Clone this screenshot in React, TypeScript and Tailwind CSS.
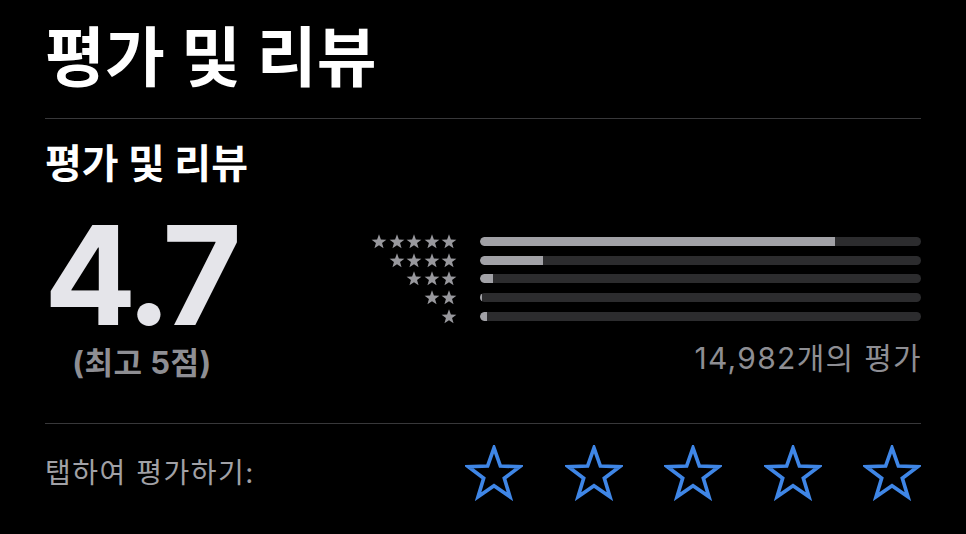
import React from "react";

const KR = '"Inter", "Noto Sans CJK KR", sans-serif';

function SmallStar() {
  return (
    <svg width="16" height="15" viewBox="0 0 24 23" className="block">
      <polygon
        points="12,0.5 14.9,8.4 23.3,8.7 16.7,13.9 19,22 12,17.3 5,22 7.3,13.9 0.7,8.7 9.1,8.4"
        fill="#98989d"
      />
    </svg>
  );
}

function BigStar() {
  return (
    <svg width="58" height="56" viewBox="0 0 60 58" className="block">
      <polygon
        points="30,3 36.6,21.8 56.6,22.4 40.7,34.5 46.5,53.6 30,42.3 13.5,53.6 19.3,34.5 3.4,22.4 23.4,21.8"
        fill="none"
        stroke="#3f86e6"
        strokeWidth="3.8"
        strokeLinejoin="miter"
        strokeMiterlimit="10"
      />
    </svg>
  );
}

const rows = [
  { stars: 5, pct: 80.5 },
  { stars: 4, pct: 14.3 },
  { stars: 3, pct: 3.0 },
  { stars: 2, pct: 0.5 },
  { stars: 1, pct: 1.6 },
];

export default function App() {
  return (
    <div
      className="w-[966px] h-[534px] bg-black overflow-hidden px-[45px] text-white"
      style={{ fontFamily: KR }}
    >
      <div className="h-[119px] border-b border-[#38383a] flex items-center pb-[4px]">
        <h1 className="text-[65px] leading-none font-bold tracking-[0.3px] text-white">
          평가 및 리뷰
        </h1>
      </div>

      <div className="h-[305px] border-b border-[#38383a] flex flex-col">
        <h2 className="pt-[25px] text-[40px] leading-none font-bold tracking-[0px] text-white">
          평가 및 리뷰
        </h2>
        <div className="flex mt-[22px]">
          <div className="w-[194px] flex flex-col items-center">
            <div
              className="mt-[14px] text-[137px] leading-[110px] font-bold tracking-[-6px] text-[#e5e5ea] pr-[4px]"
              style={{ fontFamily: '"Inter", sans-serif' }}
            >
              4.7
            </div>
            <div className="mt-[17px] text-[31px] leading-none font-bold text-[#8e8e93] tracking-[0.5px]">
              (최고 5점)
            </div>
          </div>
          <div className="flex-1 flex flex-col pl-[131px] pt-[26px]">
            {rows.map((r) => (
              <div key={r.stars} className="h-[18.75px] flex items-center">
                <div className="w-[87px] flex justify-end gap-[1.5px]">
                  {Array.from({ length: r.stars }).map((_, i) => (
                    <SmallStar key={i} />
                  ))}
                </div>
                <div className="ml-[23px] flex-1 h-[9px] rounded-full bg-[#2c2c2e] overflow-hidden">
                  <div
                    className="h-full bg-[#a1a1a6] rounded-l-full"
                    style={{ width: `${r.pct}%` }}
                  />
                </div>
              </div>
            ))}
            <div className="mt-[17px] text-right text-[30px] leading-none text-[#8e8e93] tracking-[1.3px] mr-[-1px]">
              14,982개의 평가
            </div>
          </div>
        </div>
      </div>

      <div className="h-[109px] flex items-center pb-[12px]">
        <div className="text-[28px] leading-none text-[#a1a1a6] tracking-[1.5px]">
          탭하여 평가하기:
        </div>
        <div className="ml-auto w-[456px] flex justify-between">
          {[0, 1, 2, 3, 4].map((i) => (
            <BigStar key={i} />
          ))}
        </div>
      </div>
    </div>
  );
}
